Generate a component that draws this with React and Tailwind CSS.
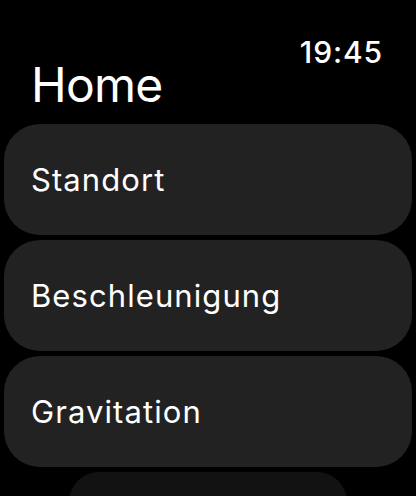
import React from "react";

const items = ["Standort", "Beschleunigung", "Gravitation"];

const App = () => {
  return (
    <div
      className="w-[416px] h-[496px] overflow-hidden bg-black text-white"
      style={{ fontFamily: "Inter, 'Noto Sans', sans-serif" }}
    >
      {/* header: title + clock */}
      <div className="flex justify-between pt-[37px] pl-[31px] pr-[33px] mb-[15px]">
        <h1 className="mt-[24px] text-[48px] leading-[48px] font-normal tracking-[-0.015em]">Home</h1>
        <span className="text-[30px] leading-[30px] font-medium tracking-[0.03em]">19:45</span>
      </div>

      <div className="flex flex-col gap-[5px] px-[4px]">
        {items.map((label) => (
          <div
            key={label}
            className="h-[111px] rounded-[36px] bg-[#222222] flex items-center pl-[27px]"
          >
            <span className="text-[31px] leading-[31px] tracking-[0.035em]">{label}</span>
          </div>
        ))}
        <div className="mx-auto w-[278px] h-[60px] rounded-[30px] bg-[#121212]" />
      </div>
    </div>
  );
};

export default App;
